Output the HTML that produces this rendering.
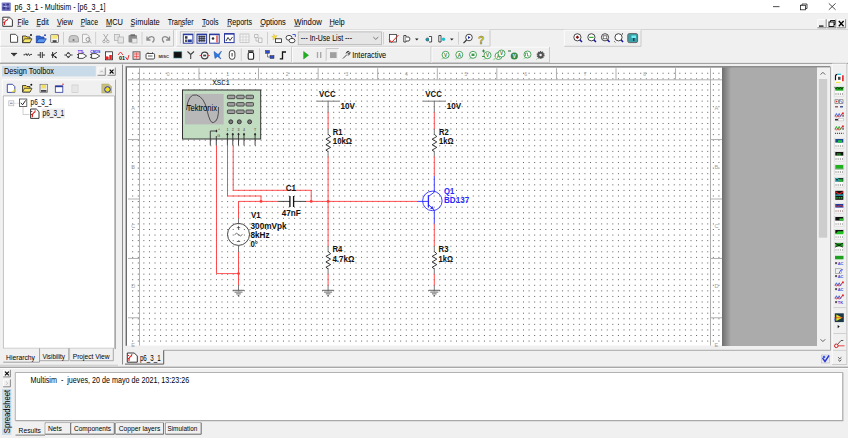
<!DOCTYPE html><html><head><meta charset="utf-8"><style>html,body{margin:0;padding:0;background:#f0f0f0;width:848px;height:438px;overflow:hidden}svg{display:block}text{font-family:"Liberation Sans",sans-serif}</style></head><body>
<svg width="848" height="438" viewBox="0 0 848 438">
<defs>
<linearGradient id="shadow" x1="0" x2="1" y1="0" y2="0"><stop offset="0" stop-color="#6e6e6e"/><stop offset="1" stop-color="#ababab"/></linearGradient>
</defs>
<rect x="0" y="0" width="848" height="438" fill="#f0f0f0"/>
<rect x="0" y="0" width="848" height="14" fill="#ffffff"/>
<rect x="0" y="13.6" width="848" height="0.9" fill="#cfcfcf"/>
<rect x="1.7" y="2.4" width="9.1" height="8.6" rx="0.8" fill="#7c7cc4"/><path d="M3 4 h2 v1.5 h-2z M6.5 3.5 h2.5 v2 h-2.5z M2.5 7 h3 v2.5 h-3z M6.5 7.5 h3 v2 h-3z" fill="#3a3a8a"/><path d="M4 6 h3 v1 h-3z" fill="#b0b0e8"/>
<text x="14.6" y="9.8" font-size="8.2" fill="#000" textLength="90.8" lengthAdjust="spacingAndGlyphs">p6_3_1 - Multisim - [p6_3_1]</text>
<rect x="773" y="6.3" width="6.5" height="0.8" fill="#222"/>
<rect x="800.5" y="5.3" width="5" height="4.5" fill="none" stroke="#222" stroke-width="0.8"/><path d="M802 5.3 V4 H807 V8.5 H805.5" fill="none" stroke="#222" stroke-width="0.8"/>
<path d="M828.8 3.4 L835.6 9.8 M835.6 3.4 L828.8 9.8" stroke="#222" stroke-width="0.8"/>
<rect x="0" y="14" width="848" height="15.5" fill="#f0f0f0"/>
<rect x="0" y="29" width="848" height="1" fill="#d4d4d4"/>
<path d="M2.8 17.2 H9.6 L12.4 20 V26.3 H2.8 Z" fill="#fff" stroke="#222" stroke-width="0.9"/><path d="M4.5 25 Q4.3 21 6.2 20.5 Q7.5 20.2 7.8 18.5 M3.2 19.5 H4.5 M3.2 22.5 H4.3" fill="none" stroke="#e02020" stroke-width="1.1"/><path d="M8.5 19 L9.5 18" stroke="#222" stroke-width="0.6"/>
<text x="17.4" y="24.6" font-size="8.2" fill="#000" textLength="11.3" lengthAdjust="spacingAndGlyphs">File</text>
<rect x="17.4" y="25.8" width="3.8" height="0.7" fill="#000"/>
<text x="36.5" y="24.6" font-size="8.2" fill="#000" textLength="12.3" lengthAdjust="spacingAndGlyphs">Edit</text>
<rect x="36.5" y="25.8" width="3.8" height="0.7" fill="#000"/>
<text x="56.9" y="24.6" font-size="8.2" fill="#000" textLength="15.9" lengthAdjust="spacingAndGlyphs">View</text>
<rect x="56.9" y="25.8" width="3.8" height="0.7" fill="#000"/>
<text x="80.7" y="24.6" font-size="8.2" fill="#000" textLength="17.3" lengthAdjust="spacingAndGlyphs">Place</text>
<rect x="80.7" y="25.8" width="3.8" height="0.7" fill="#000"/>
<text x="106" y="24.6" font-size="8.2" fill="#000" textLength="17" lengthAdjust="spacingAndGlyphs">MCU</text>
<rect x="106" y="25.8" width="5.5" height="0.7" fill="#000"/>
<text x="130.6" y="24.6" font-size="8.2" fill="#000" textLength="29.1" lengthAdjust="spacingAndGlyphs">Simulate</text>
<rect x="130.6" y="25.8" width="3.8" height="0.7" fill="#000"/>
<text x="167.8" y="24.6" font-size="8.2" fill="#000" textLength="25.7" lengthAdjust="spacingAndGlyphs">Transfer</text>
<rect x="180.10000000000002" y="25.8" width="3.0" height="0.7" fill="#000"/>
<text x="202" y="24.6" font-size="8.2" fill="#000" textLength="16.5" lengthAdjust="spacingAndGlyphs">Tools</text>
<rect x="202" y="25.8" width="3.8" height="0.7" fill="#000"/>
<text x="227.2" y="24.6" font-size="8.2" fill="#000" textLength="24.8" lengthAdjust="spacingAndGlyphs">Reports</text>
<rect x="227.2" y="25.8" width="3.8" height="0.7" fill="#000"/>
<text x="260.2" y="24.6" font-size="8.2" fill="#000" textLength="25.6" lengthAdjust="spacingAndGlyphs">Options</text>
<rect x="260.2" y="25.8" width="3.8" height="0.7" fill="#000"/>
<text x="294.3" y="24.6" font-size="8.2" fill="#000" textLength="27.5" lengthAdjust="spacingAndGlyphs">Window</text>
<rect x="294.3" y="25.8" width="5.5" height="0.7" fill="#000"/>
<text x="329.4" y="24.6" font-size="8.2" fill="#000" textLength="15.3" lengthAdjust="spacingAndGlyphs">Help</text>
<rect x="329.4" y="25.8" width="3.8" height="0.7" fill="#000"/>
<rect x="817.3" y="19.2" width="9.299999999999955" height="9.0" fill="#f0f0f0"/>
<path d="M817.6999999999999 28.2 V19.599999999999998 H826.5999999999999" fill="none" stroke="#ffffff" stroke-width="0.8"/>
<path d="M817.3 27.8 H826.1999999999999 V19.2" fill="none" stroke="#6e6e6e" stroke-width="0.8"/>
<rect x="827" y="19.2" width="9.299999999999955" height="9.0" fill="#f0f0f0"/>
<path d="M827.4 28.2 V19.599999999999998 H836.3" fill="none" stroke="#ffffff" stroke-width="0.8"/>
<path d="M827 27.8 H835.9 V19.2" fill="none" stroke="#6e6e6e" stroke-width="0.8"/>
<rect x="836.7" y="19.2" width="9.299999999999955" height="9.0" fill="#f0f0f0"/>
<path d="M837.1 28.2 V19.599999999999998 H846.0" fill="none" stroke="#ffffff" stroke-width="0.8"/>
<path d="M836.7 27.8 H845.6 V19.2" fill="none" stroke="#6e6e6e" stroke-width="0.8"/>
<rect x="819" y="25.5" width="4.5" height="1.2" fill="#000"/>
<rect x="829" y="22" width="5" height="4.5" fill="none" stroke="#000" stroke-width="0.9"/><path d="M830.5 22 V20.5 H835 V24.5 H834" fill="none" stroke="#000" stroke-width="0.9"/>
<path d="M838.8 21 L843.6 26.2 M843.6 21 L838.8 26.2" stroke="#000" stroke-width="1.3"/>
<rect x="0" y="62.9" width="848" height="1" fill="#9a9a9a"/>
<rect x="2" y="66" width="93.8" height="10.4" fill="#c9dbe9"/>
<text x="4" y="73.6" font-size="8.2" fill="#000" textLength="50" lengthAdjust="spacingAndGlyphs">Design Toolbox</text>
<rect x="97.5" y="67.5" width="8.200000000000003" height="8.200000000000003" fill="#f0f0f0"/>
<path d="M97.9 75.7 V67.9 H105.7" fill="none" stroke="#ffffff" stroke-width="0.8"/>
<path d="M97.5 75.3 H105.3 V67.5" fill="none" stroke="#6e6e6e" stroke-width="0.8"/>
<path d="M100.3 72.3 L101.6 70.8 L102.9 72.3" fill="none" stroke="#9a9a9a" stroke-width="0.7"/>
<rect x="107.5" y="67.5" width="8.200000000000003" height="8.200000000000003" fill="#f0f0f0"/>
<path d="M107.9 75.7 V67.9 H115.7" fill="none" stroke="#ffffff" stroke-width="0.8"/>
<path d="M107.5 75.3 H115.3 V67.5" fill="none" stroke="#6e6e6e" stroke-width="0.8"/>
<path d="M109.7 69.7 L113.5 73.5 M113.5 69.7 L109.7 73.5" stroke="#000" stroke-width="1.1"/>
<path d="M2.3 348.5 V79.8 H115.3" fill="none" stroke="#ffffff" stroke-width="0.9"/>
<path d="M115.5 79.6 V349" fill="none" stroke="#a0a0a0" stroke-width="0.9"/>
<path d="M7.3 84.3 H12.5 L14.8 86.6 V92.4 H7.3 Z" fill="#fff" stroke="#2a3a9a" stroke-width="0.9"/><path d="M11.5 92.2 L14.6 88.8 V92.2 Z" fill="#f0e030"/>
<path d="M22.5 85.5 H26 L27 86.5 H30 V92 H22.5 Z" fill="#f0d040" stroke="#222" stroke-width="0.8"/><path d="M22.5 92 L24.5 88.3 H32 L30 92 Z" fill="#f8e870" stroke="#222" stroke-width="0.7"/><circle cx="31.3" cy="84.8" r="1" fill="#111"/>
<rect x="40" y="84.3" width="7.5" height="8" fill="#e8e8e8" stroke="#666" stroke-width="0.7"/><rect x="41.5" y="84.8" width="4.5" height="3.6" fill="#f4e060"/><rect x="41" y="90" width="5.5" height="1.8" fill="#444"/>
<rect x="55.3" y="86" width="7.5" height="6.3" fill="#fff" stroke="#2a3a9a" stroke-width="0.8"/><rect x="55.3" y="85.6" width="7.5" height="1.6" fill="#2a3a9a"/><circle cx="63" cy="84.3" r="0.8" fill="#e03030"/>
<rect x="72" y="85" width="6" height="7.5" fill="none" stroke="#c8c8c8" stroke-width="0.7"/><path d="M74 85 V92.5 M76 85 V92.5" stroke="#d0d0d0" stroke-width="0.6"/>
<path d="M101.8 84 H108.5 L111.5 86.5 V93 H101.8 Z" fill="#c8c080" stroke="#a8a060" stroke-width="0.5"/><circle cx="107.5" cy="89.5" r="2.8" fill="#f0e020" stroke="#2030c0" stroke-width="1"/>
<rect x="3.3" y="95.9" width="111.3" height="252.4" fill="#ffffff"/>
<path d="M3.3 348.3 V95.9 H114.6" fill="none" stroke="#a0a0a0" stroke-width="0.7"/><path d="M114.6 96 V348.3 H3.3" fill="none" stroke="#a8a8a8" stroke-width="0.8"/>
<rect x="8.8" y="100.8" width="5" height="5" fill="#f6f6f6" stroke="#b0b0b0" stroke-width="0.6"/><path d="M10 103.3 H12.6" stroke="#4a5a8a" stroke-width="0.7"/>
<path d="M14 103.3 H19" stroke="#b0b0b0" stroke-width="0.6" stroke-dasharray="0.8 0.6"/>
<rect x="19.4" y="99" width="7.4" height="7.4" fill="#fff" stroke="#444" stroke-width="0.8"/><path d="M20.8 102.8 L22.6 104.8 L25.6 100.4" fill="none" stroke="#111" stroke-width="0.9"/>
<text x="30.6" y="104.8" font-size="8.2" fill="#000" textLength="21.4" lengthAdjust="spacingAndGlyphs">p6_3_1</text>
<path d="M23 107 V114.5 H29.5" fill="none" stroke="#b0b0b0" stroke-width="0.6"/>
<rect x="41.5" y="108.5" width="23.5" height="10" fill="#ececec"/>
<path d="M30.6 109 H36.3 L39 111.7 V118.4 H30.6 Z" fill="#fff" stroke="#222" stroke-width="0.9"/><path d="M32.3 117.2 Q32.1 113.5 33.8 112.8 Q35 112.4 35.3 110.3 M31 111.5 H32.3 M31 114.5 H32.1" fill="none" stroke="#e02020" stroke-width="1.1"/>
<text x="42.6" y="116.2" font-size="8.2" fill="#000" textLength="21.6" lengthAdjust="spacingAndGlyphs">p6_3_1</text>
<path d="M3.2 348.6 V362 H39.5 V348.6" fill="#f0f0f0" stroke="none"/>
<path d="M3.2 362.2 H39.5 V348.6" fill="none" stroke="#8a8a8a" stroke-width="0.8"/>
<text x="6" y="359.7" font-size="7.3" fill="#000" textLength="29" lengthAdjust="spacingAndGlyphs">Hierarchy</text>
<path d="M39.8 348.6 V360.7 H68.7 V348.6" fill="#f0f0f0" stroke="#8a8a8a" stroke-width="0.7"/><path d="M40.3 348.6 V360.2" stroke="#fff" stroke-width="0.6"/>
<text x="42.4" y="358.5" font-size="7.3" fill="#000" textLength="22.6" lengthAdjust="spacingAndGlyphs">Visibility</text>
<path d="M70 348.6 V360.7 H113.3 V348.6" fill="#f0f0f0" stroke="#8a8a8a" stroke-width="0.7"/><path d="M70.5 348.6 V360.2" stroke="#fff" stroke-width="0.6"/>
<text x="72.7" y="358.5" font-size="7.3" fill="#000" textLength="36.9" lengthAdjust="spacingAndGlyphs">Project View</text>
<rect x="0" y="364.8" width="118" height="0.7" fill="#b8b8b8"/>
<rect x="122" y="64.5" width="1" height="300" fill="#8c8c8c"/>
<rect x="125.6" y="66.4" width="705" height="284" fill="#f0f0f0"/>
<rect x="127" y="67.5" width="595" height="278" fill="#ffffff"/>
<path d="M132.2 73.25H722M132.2 78.83H722M132.2 84.41H722M132.2 89.99H722M132.2 95.57H722M132.2 101.15H722M132.2 106.73H722M132.2 112.31H722M132.2 117.89H722M132.2 123.47H722M132.2 129.05H722M132.2 134.63H722M132.2 140.21H722M132.2 145.79H722M132.2 151.37H722M132.2 156.95H722M132.2 162.53H722M132.2 168.11H722M132.2 173.69H722M132.2 179.27H722M132.2 184.85H722M132.2 190.43H722M132.2 196.01H722M132.2 201.59H722M132.2 207.17H722M132.2 212.75H722M132.2 218.33H722M132.2 223.91H722M132.2 229.49H722M132.2 235.07H722M132.2 240.65H722M132.2 246.23H722M132.2 251.81H722M132.2 257.39H722M132.2 262.97H722M132.2 268.55H722M132.2 274.13H722M132.2 279.71H722M132.2 285.29H722M132.2 290.87H722M132.2 296.45H722M132.2 302.03H722M132.2 307.61H722M132.2 313.19H722M132.2 318.77H722M132.2 324.35H722M132.2 329.93H722M132.2 335.51H722M132.2 341.09H722" stroke="#5e5e5e" stroke-width="1" stroke-dasharray="1 4.583" fill="none"/>
<rect x="722" y="67.5" width="95" height="278.5" fill="#ababab"/>
<rect x="722" y="67.5" width="9" height="278.5" fill="url(#shadow)"/>
<path d="M126.3 345.8 V66.9 H830" fill="none" stroke="#6a6a6a" stroke-width="1.4"/>
<path d="M163.7 350.3 H830.6 V66.5" fill="none" stroke="#a0a0a0" stroke-width="0.9"/>
<rect x="817" y="67.6" width="13" height="278.4" fill="#f0f0f0"/>
<rect x="818.8" y="79" width="8.4" height="158.7" fill="#cdcdcd"/>
<path d="M820.6 74.6 L822.9 72.3 L825.2 74.6" fill="none" stroke="#505050" stroke-width="0.9"/>
<path d="M820.6 339.3 L822.9 341.6 L825.2 339.3" fill="none" stroke="#505050" stroke-width="0.9"/>
<path d="M125 350.3 V364.1 H163.7 V350.3" fill="#f0f0f0" stroke="none"/>
<path d="M125.3 350.5 V363.6" stroke="#ffffff" stroke-width="0.7"/>
<path d="M125 364.1 H163.7 V350.3" fill="none" stroke="#4a4a4a" stroke-width="0.9"/>
<path d="M127.3 353 H134.3 L137.3 356 V362.2 H127.3 Z" fill="#fff" stroke="#222" stroke-width="0.9"/><path d="M129 361 Q128.8 357.3 130.5 356.6 Q131.7 356.2 132 354.2 M127.7 355.5 H129 M127.7 358.5 H128.8" fill="none" stroke="#e02020" stroke-width="1.1"/>
<text x="139.9" y="361.3" font-size="8.2" fill="#000" textLength="20.8" lengthAdjust="spacingAndGlyphs">p6_3_1</text>
<rect x="821.5" y="355" width="8" height="8" fill="#e8e8f0" stroke="#b0b0c0" stroke-width="0.5"/><path d="M822.5 358 L825 361.5 L829 355.5" fill="none" stroke="#2a3ad0" stroke-width="1.4"/><circle cx="824" cy="357" r="1.3" fill="#3a5af0"/>
<rect x="0" y="366.6" width="848" height="1.4" fill="#a8a8a8"/>
<rect x="0" y="368" width="848" height="0.8" fill="#ffffff"/>
<rect x="15.3" y="372.5" width="827.5" height="48.5" fill="#ffffff"/>
<path d="M15.3 420.6 V372.5 H842.8" fill="none" stroke="#a0a0a0" stroke-width="0.8"/>
<path d="M15.3 420.6 H842.8 V372.5" fill="none" stroke="#a8a8a8" stroke-width="1.2"/>
<text x="30.6" y="382.6" font-size="8.2" fill="#000" textLength="158.7" lengthAdjust="spacingAndGlyphs" style="white-space:pre">Multisim  -  jueves, 20 de mayo de 2021, 13:23:26</text>
<rect x="2" y="389" width="9.3" height="46" fill="#c9dbe9"/>
<text transform="translate(10.2 433.2) rotate(-90)" font-size="8.2" fill="#000" textLength="43.4" lengthAdjust="spacingAndGlyphs">Spreadsheet</text>
<rect x="3.1" y="369.8" width="7.700000000000001" height="7.5" fill="#f0f0f0"/>
<path d="M3.5 377.3 V370.2 H10.8" fill="none" stroke="#ffffff" stroke-width="0.8"/>
<path d="M3.1 376.90000000000003 H10.4 V369.8" fill="none" stroke="#6e6e6e" stroke-width="0.8"/>
<path d="M5 371.7 L8.9 375.4 M8.9 371.7 L5 375.4" stroke="#000" stroke-width="1.1"/>
<rect x="3.1" y="379.4" width="7.700000000000001" height="7.800000000000011" fill="#f0f0f0"/>
<path d="M3.5 387.2 V379.79999999999995 H10.8" fill="none" stroke="#ffffff" stroke-width="0.8"/>
<path d="M3.1 386.8 H10.4 V379.4" fill="none" stroke="#6e6e6e" stroke-width="0.8"/>
<path d="M6.2 381.8 L7.8 383.3 L6.2 384.8" fill="none" stroke="#b0b0b0" stroke-width="0.7"/>
<path d="M15.5 422 V435.1 H45" fill="#f0f0f0" stroke="none"/>
<path d="M15.5 435.1 H45" stroke="#707070" stroke-width="0.9"/>
<text x="18.6" y="432.6" font-size="7.6" fill="#000" textLength="22.3" lengthAdjust="spacingAndGlyphs">Results</text>
<path d="M45.1 434.2 V422.8 H70.6" fill="none" stroke="#8a8a8a" stroke-width="0.8"/>
<path d="M46.0 433.8 V423.7 H70.1" fill="none" stroke="#ffffff" stroke-width="0.7"/>
<path d="M45.1 434.2 H70.6 V422.8" fill="none" stroke="#5a5a5a" stroke-width="0.9"/>
<text x="48" y="431.4" font-size="7.6" fill="#000" textLength="13.8" lengthAdjust="spacingAndGlyphs">Nets</text>
<path d="M71 434.2 V422.8 H114.3" fill="none" stroke="#8a8a8a" stroke-width="0.8"/>
<path d="M71.9 433.8 V423.7 H113.8" fill="none" stroke="#ffffff" stroke-width="0.7"/>
<path d="M71 434.2 H114.3 V422.8" fill="none" stroke="#5a5a5a" stroke-width="0.9"/>
<text x="74" y="431.4" font-size="7.6" fill="#000" textLength="37" lengthAdjust="spacingAndGlyphs">Components</text>
<path d="M115.6 434.2 V422.8 H163.6" fill="none" stroke="#8a8a8a" stroke-width="0.8"/>
<path d="M116.5 433.8 V423.7 H163.1" fill="none" stroke="#ffffff" stroke-width="0.7"/>
<path d="M115.6 434.2 H163.6 V422.8" fill="none" stroke="#5a5a5a" stroke-width="0.9"/>
<text x="118.8" y="431.4" font-size="7.6" fill="#000" textLength="41.5" lengthAdjust="spacingAndGlyphs">Copper layers</text>
<path d="M165.5 434.2 V422.8 H201.2" fill="none" stroke="#8a8a8a" stroke-width="0.8"/>
<path d="M166.4 433.8 V423.7 H200.7" fill="none" stroke="#ffffff" stroke-width="0.7"/>
<path d="M165.5 434.2 H201.2 V422.8" fill="none" stroke="#5a5a5a" stroke-width="0.9"/>
<text x="167.4" y="431.4" font-size="7.6" fill="#000" textLength="29.9" lengthAdjust="spacingAndGlyphs">Simulation</text>
<path d="M832.2 364.5 V64 H847" fill="none" stroke="#ffffff" stroke-width="0.8"/>
<path d="M832 364.5 H846.8 V64" fill="none" stroke="#c0c0c0" stroke-width="0.8"/>
<rect x="834.8" y="74.3" width="9" height="8.5" rx="2" fill="#fff"/><path d="M835.5 80.3 V76.3 Q835.5 74.3 837.5 74.3" fill="none" stroke="#111" stroke-width="1.2"/><path d="M837.5 74.3 H841.0" stroke="#30c8e0" stroke-width="1.4"/><path d="M842.9 75.3 V81.3" stroke="#e02020" stroke-width="1.6"/><path d="M836.0 82.3 H840.5" stroke="#f0e020" stroke-width="1"/><rect x="838.0" y="76.8" width="2.5" height="3" fill="#444"/>
<rect x="834.7" y="86.5" width="9.2" height="9.6" fill="#fafafa" stroke="#d0d0d0" stroke-width="0.5"/>
<rect x="835.3" y="87.0" width="8" height="3.6" fill="#18a018"/>
<path d="M834.5 87.0 l1.5 2 l1.5 -2 l1.5 2 l1.5 -2 l1.5 2 l1.5 -2" fill="none" stroke="#111" stroke-width="0.6"/>
<path d="M835.5 94.0 H843.0" stroke="#555" stroke-width="1.1" stroke-dasharray="1 1.2"/>
<rect x="835.0" y="99.8" width="3.5" height="3.5" fill="#fff" stroke="#555" stroke-width="0.6"/><rect x="835.8" y="100.7" width="1.6" height="1.6" fill="#e03030"/><rect x="839.5" y="99.8" width="3.5" height="3.5" fill="#fff" stroke="#555" stroke-width="0.6"/><path d="M840.0 100.3 L842.5 103.0" stroke="#3050e0" stroke-width="0.8"/><path d="M835.0 106.8 H838.0" stroke="#804040" stroke-width="1.2"/><path d="M840.0 106.8 H843.0" stroke="#203080" stroke-width="1.2"/>
<path d="M835.0 116.5 l1.4 -3 l1.4 3 l1.4 -3 l1.4 3 l1.4 -3" fill="none" stroke="#3a5ae0" stroke-width="0.9"/><path d="M835.0 115.3 l1.4 2 l1.4 -2 l1.4 2 l1.4 -2" fill="none" stroke="#e03030" stroke-width="0.7"/><rect x="842.0" y="112.5" width="1.8" height="1.8" fill="#e02020"/><rect x="842.3" y="114.8" width="1.5" height="2" fill="#666"/>
<rect x="834.5" y="117.3" width="3" height="1.6" fill="#333" transform="translate(0.5 1.6)"/><rect x="834.5" y="117.3" width="5" height="2.4" fill="#fff" stroke="#999" stroke-width="0.4" transform="translate(4 1.2)"/>
<path d="M835.0 129.5 l1.4 -3 l1.4 3 l1.4 -3 l1.4 3 l1.4 -3" fill="none" stroke="#20a020" stroke-width="0.9"/><path d="M835.0 128.3 l1.4 2 l1.4 -2 l1.4 2 l1.4 -2" fill="none" stroke="#e03030" stroke-width="0.7"/><rect x="842.0" y="125.50000000000001" width="1.8" height="1.8" fill="#e02020"/><rect x="842.3" y="127.80000000000001" width="1.5" height="2" fill="#666"/>
<path d="M834.5 130.3 h8.5" transform="translate(0.5 3)" stroke="#554" stroke-width="1.2" stroke-dasharray="1.1 0.9"/>
<rect x="834.7" y="138.5" width="9.2" height="9.6" fill="#fafafa" stroke="#d0d0d0" stroke-width="0.5"/>
<rect x="835.3" y="139.0" width="8" height="3.6" fill="#1a4a8a"/>
<rect x="834.5" y="139.0" width="4" height="2.5" fill="#20c040" transform="translate(3.5 1.2)"/>
<path d="M835.5 146.0 H843.0" stroke="#665" stroke-width="1.1" stroke-dasharray="1 1.2"/>
<rect x="834.7" y="151.5" width="9.2" height="9.6" fill="#fafafa" stroke="#d0d0d0" stroke-width="0.5"/>
<rect x="835.3" y="152.0" width="8" height="3.6" fill="#111"/>
<text x="834.5" y="152.0" font-size="3.6" fill="#30e030" transform="translate(2.2 3.8)">88</text>
<path d="M835.5 159.0 H843.0" stroke="#555" stroke-width="1.1" stroke-dasharray="1 1.2"/>
<rect x="834.7" y="164.5" width="9.2" height="9.6" fill="#fafafa" stroke="#d0d0d0" stroke-width="0.5"/>
<rect x="835.3" y="165.0" width="8" height="3.6" fill="#20b020"/>
<path d="M834.5 165.0 h8.5" transform="translate(0.5 4)" stroke="#116611" stroke-width="0.6"/>
<path d="M835.5 172.0 H843.0" stroke="#555" stroke-width="1.1" stroke-dasharray="1 1.2"/>
<rect x="834.7" y="177.5" width="9.2" height="9.6" fill="#fafafa" stroke="#d0d0d0" stroke-width="0.5"/>
<rect x="835.3" y="178.0" width="8" height="3.6" fill="#1a3a3a"/>
<circle cx="834.5" cy="178.0" r="1.5" fill="none" stroke="#30d0e0" stroke-width="0.8" transform="translate(2.5 1.8)"/><rect x="834.5" y="178.0" width="3.5" height="2.5" fill="#20c020" transform="translate(4.5 1.3)"/>
<path d="M835.5 185.0 H843.0" stroke="#555" stroke-width="1.1" stroke-dasharray="1 1.2"/>
<rect x="835.3" y="190.8" width="8" height="9" fill="#111"/><path d="M835.5 191.8 L839.2 194.3 L843.1 191.8" fill="none" stroke="#e02020" stroke-width="1.2"/><rect x="835.3" y="194.5" width="8" height="1.2" fill="#30c0e0"/><path d="M835.5 197.8 H843.1" stroke="#20e020" stroke-width="1.3" stroke-dasharray="1.2 0.6"/>
<rect x="834.7" y="203.5" width="9.2" height="9.6" fill="#fafafa" stroke="#d0d0d0" stroke-width="0.5"/>
<rect x="835.3" y="204.0" width="8" height="3.6" fill="#2040a0"/>
<path d="M834.5 204.0 q2 3 4 1 q2 -2 4 1" transform="translate(0.8 1)" fill="none" stroke="#e03030" stroke-width="0.9"/>
<path d="M835.5 211.0 H843.0" stroke="#744" stroke-width="1.1" stroke-dasharray="1 1.2"/>
<rect x="834.7" y="216.5" width="9.2" height="9.6" fill="#fafafa" stroke="#d0d0d0" stroke-width="0.5"/>
<rect x="835.3" y="217.0" width="8" height="3.6" fill="#111"/>
<rect x="834.5" y="217.0" width="4" height="2" fill="#30d030" transform="translate(5 1.5)"/>
<path d="M835.5 224.0 H843.0" stroke="#777" stroke-width="1.1" stroke-dasharray="1 1.2"/>
<rect x="834.7" y="229.5" width="9.2" height="9.6" fill="#fafafa" stroke="#d0d0d0" stroke-width="0.5"/>
<rect x="835.3" y="230.0" width="8" height="3.6" fill="#111"/>
<path d="M834.5 230.0 l3 -3 l5 0 l0 3 z" transform="translate(0.5 4.3)" fill="#20c020"/>
<path d="M835.5 237.0 H843.0" stroke="#777" stroke-width="1.1" stroke-dasharray="1 1.2"/>
<rect x="834.7" y="242.5" width="9.2" height="9.6" fill="#fafafa" stroke="#d0d0d0" stroke-width="0.5"/>
<rect x="835.3" y="243.0" width="8" height="3.6" fill="#20a020"/>
<path d="M834.5 243.0 l8 4 M834.5 243.0 m0 4 l8 -4" transform="translate(0.5 0.2)" stroke="#111" stroke-width="0.8"/>
<path d="M835.5 250.0 H843.0" stroke="#777" stroke-width="1.1" stroke-dasharray="1 1.2"/>
<rect x="834.5" y="260.3" width="8.5" height="3.5" transform="translate(0.5 -4.5)" fill="#20a020"/>
<text x="837.7" y="264.6" font-size="4" font-weight="bold" fill="#3a4ae0">AC</text><rect x="835.1" y="262.1" width="2" height="2" fill="#555"/>
<path d="M834.5 273.3 l2 -3.5 h2" transform="translate(4.5 0)" fill="none" stroke="#3a4ae0" stroke-width="0.9"/><rect x="834.5" y="273.3" width="6" height="4.5" transform="translate(1 -4.5)" fill="none" stroke="#777" stroke-width="0.5"/>
<text x="837.7" y="277.6" font-size="4" font-weight="bold" fill="#3a4ae0">AC</text><rect x="835.1" y="275.1" width="2" height="2" fill="#555"/>
<path d="M834.5 286.3 l1.4 -3 l1.4 3 l1.4 -3 l1.4 3 l1.4 -3" transform="translate(0.5 -0.5)" fill="none" stroke="#3a5ae0" stroke-width="0.9"/><path d="M834.5 286.3 l1.4 2 l1.4 -2 l1.4 2 l1.4 -2" transform="translate(0.5 -2)" fill="none" stroke="#e03030" stroke-width="0.7"/><rect x="834.5" y="286.3" width="1.8" height="1.8" transform="translate(7.5 -4.8)" fill="#e02020"/>
<text x="837.7" y="290.6" font-size="4" font-weight="bold" fill="#3a4ae0">AC</text><rect x="835.1" y="288.1" width="2" height="2" fill="#555"/>
<path d="M834.5 299.3 l1.4 -3 l1.4 3 l1.4 -3 l1.4 3 l1.4 -3" transform="translate(0.5 -0.5)" fill="none" stroke="#3a5ae0" stroke-width="0.9"/><path d="M834.5 299.3 l1.4 2 l1.4 -2 l1.4 2 l1.4 -2" transform="translate(0.5 -2)" fill="none" stroke="#e03030" stroke-width="0.7"/><rect x="834.5" y="299.3" width="1.8" height="1.8" transform="translate(7.5 -4.8)" fill="#e02020"/>
<text x="837.7" y="303.6" font-size="4" font-weight="bold" fill="#3a4ae0">TK</text><rect x="835.1" y="301.1" width="2" height="2" fill="#555"/>
<path d="M833.5 307.6 H846" stroke="#c8c8c8" stroke-width="0.8"/>
<rect x="834.8" y="313.3" width="9" height="8.8" fill="#1a3a4a"/><path d="M836.3 314.5 L842.3 317.7 L836.3 320.9 Z" fill="#f0e020"/><path d="M834.5 317.7 H844.0" stroke="#e02020" stroke-width="0.6"/><rect x="834.5" y="318.5" width="1.5" height="2" fill="#3050e0"/>
<path d="M837.7 325 L839.7 326.6 L837.7 328.2 Z" fill="#111"/>
<path d="M833.5 333.5 H846" stroke="#c8c8c8" stroke-width="0.8"/>
<circle cx="836.3" cy="345.8" r="1.8" fill="none" stroke="#d02020" stroke-width="1"/><path d="M837.5 344.5 L841.0 340.5 H843.3" fill="none" stroke="#333" stroke-width="0.8"/><path d="M838.0 345.8 H844.5" stroke="#e02020" stroke-width="0.8"/>
<path d="M833 350.4 H846.5" stroke="#c8c8c8" stroke-width="0.8"/>
<path d="M838.2 357.3 L839.8 358.8 L841.4 357.3 M838.2 359.8 L839.8 361.3 L841.4 359.8" fill="none" stroke="#222" stroke-width="0.8"/>
<path d="M0.5 46.3 V30.2 H173.5" fill="none" stroke="#ffffff" stroke-width="0.8"/>
<path d="M0.5 46.3 H173.5 V30.2" fill="none" stroke="#c4c4c4" stroke-width="0.9"/>
<path d="M176.5 46.3 V30.2 H490" fill="none" stroke="#ffffff" stroke-width="0.8"/>
<path d="M176.5 46.3 H490 V30.2" fill="none" stroke="#c4c4c4" stroke-width="0.9"/>
<path d="M564.3 46.3 V30.2 H641" fill="none" stroke="#ffffff" stroke-width="0.8"/>
<path d="M564.3 46.3 H641 V30.2" fill="none" stroke="#c4c4c4" stroke-width="0.9"/>
<path d="M0.5 62.6 V47.2 H291.7" fill="none" stroke="#ffffff" stroke-width="0.8"/>
<path d="M0.5 62.6 H291.7 V47.2" fill="none" stroke="#c4c4c4" stroke-width="0.9"/>
<path d="M292.5 62.6 V47.2 H431" fill="none" stroke="#ffffff" stroke-width="0.8"/>
<path d="M292.5 62.6 H431 V47.2" fill="none" stroke="#c4c4c4" stroke-width="0.9"/>
<path d="M432 62.6 V47.2 H549.5" fill="none" stroke="#ffffff" stroke-width="0.8"/>
<path d="M432 62.6 H549.5 V47.2" fill="none" stroke="#c4c4c4" stroke-width="0.9"/>
<rect x="63.1" y="32" width="0.8" height="12.5" fill="#c8c8c8"/>
<rect x="95.3" y="32" width="0.8" height="12.5" fill="#c8c8c8"/>
<rect x="141.6" y="32" width="0.8" height="12.5" fill="#c8c8c8"/>
<rect x="267.1" y="32" width="0.8" height="12.5" fill="#c8c8c8"/>
<rect x="383.1" y="32" width="0.8" height="12.5" fill="#c8c8c8"/>
<rect x="458.1" y="32" width="0.8" height="12.5" fill="#c8c8c8"/>
<rect x="240.79999999999998" y="48.5" width="0.8" height="12.5" fill="#c8c8c8"/>
<rect x="259.20000000000005" y="48.5" width="0.8" height="12.5" fill="#c8c8c8"/>
<path d="M10.5 34.3 H15.5 L17.6 36.4 V42.3 H10.5 Z" fill="#fff" stroke="#3a3a3a" stroke-width="0.9"/>
<path d="M22.5 36 H26 L27 37 H30 V42.6 H22.5 Z" fill="#f0d040" stroke="#222" stroke-width="0.8"/><path d="M22.5 42.6 L24.5 38.8 H32 L30 42.6 Z" fill="#f8e870" stroke="#222" stroke-width="0.7"/><circle cx="31" cy="35" r="1" fill="#111"/>
<path d="M36.3 36 H40 L41 37 H44 V42.6 H36.3 Z" fill="#2e6ad8" stroke="#1a3a9a" stroke-width="0.7"/><path d="M36.3 42.6 L38.5 38.8 H46.3 L44 42.6 Z" fill="#5a9af0" stroke="#1a3a9a" stroke-width="0.7"/><circle cx="45" cy="35.2" r="0.9" fill="#1a3aa0"/>
<rect x="50.7" y="34.6" width="7.8" height="7.9" rx="0.6" fill="#f2f2f2" stroke="#6a6a6a" stroke-width="0.8"/><rect x="52.2" y="35" width="4.8" height="3.8" fill="#f6e878"/><rect x="52.6" y="40.2" width="4" height="2" fill="#444"/><rect x="57.6" y="34.8" width="0.8" height="1.5" fill="#c04040"/>
<path d="M69 39 Q69 35.5 72 35.5 H75 Q78.5 35.5 78.5 39 V42 H69 Z" fill="#c8c8c8" stroke="#9a9a9a" stroke-width="0.8"/><circle cx="73.5" cy="40" r="1" fill="#777"/>
<path d="M82.5 34.3 H87 L89 36.3 V42.6 H82.5 Z" fill="#f6f6f6" stroke="#9a9a9a" stroke-width="0.7"/><circle cx="88" cy="39.5" r="2" fill="none" stroke="#8a8a8a" stroke-width="0.8"/><path d="M89.4 41 L91.5 43" stroke="#8a8a8a" stroke-width="0.9"/>
<path d="M103.5 34 L108 41 M108 34 L103.5 41" stroke="#9a9a9a" stroke-width="0.8"/><circle cx="104" cy="41.5" r="1.3" fill="none" stroke="#9a9a9a" stroke-width="0.7"/><circle cx="107.8" cy="41.5" r="1.3" fill="none" stroke="#9a9a9a" stroke-width="0.7"/>
<rect x="114.5" y="34.5" width="5" height="6" fill="#e6e6e6" stroke="#aaa" stroke-width="0.7"/><rect x="118" y="37" width="5.5" height="6" fill="#e6e6e6" stroke="#aaa" stroke-width="0.7"/>
<rect x="128.5" y="35" width="8.5" height="7.6" fill="#8c8c8c" rx="1"/><rect x="130.5" y="34.3" width="4.5" height="1.8" fill="#6a6a6a"/><rect x="132" y="38.5" width="5" height="4.5" fill="#e8e8e8" stroke="#999" stroke-width="0.5"/>
<path d="M147 36.5 V40 H150.5 M147.3 39.7 Q150 35.5 153 37 Q155.5 39 152.5 42.5" fill="none" stroke="#8a8a8a" stroke-width="1.3"/>
<path d="M169.5 36.5 V40 H166 M169.2 39.7 Q166.5 35.5 163.5 37 Q161 39 164 42.5" fill="none" stroke="#8a8a8a" stroke-width="1.3"/>
<path d="M180.4 43.6 V31.7 H193.6" fill="none" stroke="#c0c0c0" stroke-width="0.8"/><path d="M194.4 43.6 V31.7 H208" fill="none" stroke="#c0c0c0" stroke-width="0.8"/>
<rect x="183.3" y="34.2" width="9.6" height="9" fill="#ffffff" stroke="#2a3aa0" stroke-width="1"/><rect x="183.3" y="33.900000000000006" width="9.6" height="1.3" fill="#2a3aa0"/>
<rect x="185" y="36.2" width="2.5" height="2.5" fill="#334"/><rect x="188" y="39.5" width="3.8" height="2.6" fill="#223a9a"/><rect x="185" y="39.5" width="2.5" height="2.5" fill="#555"/>
<rect x="197" y="34.2" width="9.6" height="9" fill="#ffffff" stroke="#2a3aa0" stroke-width="1"/><rect x="197" y="33.900000000000006" width="9.6" height="1.3" fill="#2a3aa0"/>
<rect x="198.2" y="35.5" width="7.2" height="6.5" fill="#9aa0c0"/>
<rect x="198.5" y="36.0" width="6.8" height="0.8" fill="#333"/>
<rect x="198.5" y="38.1" width="6.8" height="0.8" fill="#333"/>
<rect x="198.5" y="40.2" width="6.8" height="0.8" fill="#333"/>
<rect x="199.3" y="35.7" width="0.7" height="6.2" fill="#333"/>
<rect x="201.5" y="35.7" width="0.7" height="6.2" fill="#333"/>
<rect x="203.70000000000002" y="35.7" width="0.7" height="6.2" fill="#333"/>
<rect x="209.6" y="34.2" width="9.6" height="9" fill="#ffffff" stroke="#2a3aa0" stroke-width="1"/><rect x="209.6" y="33.900000000000006" width="9.6" height="1.3" fill="#2a3aa0"/>
<circle cx="213" cy="38.5" r="1.3" fill="#333"/><rect x="216.3" y="35.5" width="1.4" height="7" fill="#e04040"/>
<rect x="224.5" y="33.6" width="9.6" height="9" fill="#ffffff" stroke="#2a3aa0" stroke-width="1"/><rect x="224.5" y="33.300000000000004" width="9.6" height="1.3" fill="#2a3aa0"/>
<path d="M226 41 L228 37.5 L230 40.5 L232.5 37" fill="none" stroke="#222" stroke-width="0.9"/>
<rect x="240" y="34" width="9" height="8.6" fill="#f6f6f6" stroke="#b8b8b8" stroke-width="0.7"/><path d="M243 34 V42.6 M246 34 V42.6 M240 37 H249 M240 40 H249" stroke="#c8c8c8" stroke-width="0.6"/>
<path d="M254.5 34.5 H258 V37.5 H254.5 Z M258.5 38 H262 V42.5 H258.5 Z M256 37.5 V41 H258.5" fill="#f4f4f4" stroke="#aaa" stroke-width="0.7"/>
<path d="M273.5 33.8 L275 36 L277.3 35.5 L275.8 37.3 L277 39.5 L274.8 38.6 L273 40 L273.3 37.6 L271.6 36.5 L273.9 36.2 Z" fill="#f4e030" stroke="#c8a020" stroke-width="0.3"/><rect x="275.5" y="38.8" width="6" height="3.6" fill="#fff" stroke="#222" stroke-width="0.8"/>
<ellipse cx="289" cy="37.8" rx="3" ry="2.4" fill="#fff" stroke="#222" stroke-width="0.8"/><ellipse cx="292" cy="40.6" rx="3" ry="2.2" fill="#fff" stroke="#222" stroke-width="0.8"/><path d="M292.5 34.5 L295.3 34.5 L295.3 37" fill="none" stroke="#2a4ad0" stroke-width="0.9"/>
<rect x="298.2" y="31.9" width="83.2" height="12.8" fill="#e6e6e6" stroke="#adadad" stroke-width="0.7"/>
<text x="300.75" y="41" font-size="8.2" fill="#000" textLength="51.25" lengthAdjust="spacingAndGlyphs">--- In-Use List ---</text>
<path d="M373.3 37 L375.8 39.4 L378.3 37" fill="none" stroke="#444" stroke-width="0.7"/>
<rect x="389.5" y="34.5" width="7" height="7.5" fill="#fff" stroke="#333" stroke-width="0.8"/><path d="M389 39 L391.5 42.5 L398.5 35" fill="none" stroke="#e02020" stroke-width="1"/>
<path d="M403.8 35.5 H406 V42 H403.8 Z" fill="#fff" stroke="#222" stroke-width="0.8"/><path d="M406 37 H409 Q411 39 409 41 H406" fill="#fff" stroke="#222" stroke-width="0.8"/><path d="M415 38.5 H418.6 L416.8 40.6 Z" fill="#222"/>
<circle cx="427.5" cy="39.5" r="1.6" fill="#1aa0b0" stroke="#134" stroke-width="0.5"/><path d="M429 36.5 H431.6 V42 H429" fill="#fff" stroke="#222" stroke-width="0.8"/>
<path d="M438.8 35.5 H441 V42 H438.8 Z" fill="#fff" stroke="#222" stroke-width="0.8"/><circle cx="443.5" cy="39.3" r="1.7" fill="#1ac0d0"/><path d="M450 38.5 H453.6 L451.8 40.6 Z" fill="#222"/>
<circle cx="469" cy="37.5" r="3.3" fill="#fff" stroke="#333" stroke-width="0.9"/><path d="M468 36 L470.5 37.5 L468 39 Z" fill="#1a2aa0"/><path d="M466.6 40 L463.5 43.2" stroke="#333" stroke-width="1.2"/>
<text x="478" y="43.5" font-size="10.5" font-weight="bold" fill="#e8d820" stroke="#555" stroke-width="0.35">?</text>
<circle cx="577.4" cy="37.3" r="3.6" fill="#fff" stroke="#333" stroke-width="0.9"/><path d="M579.9 39.9 L582.0 42.0" stroke="#1a1aa0" stroke-width="1.5"/>
<path d="M577.4 35.5 L579.2 37.3 L577.4 39.1 L575.6 37.3 Z" fill="#8a1010"/>
<circle cx="591.4" cy="37.3" r="3.6" fill="#fff" stroke="#333" stroke-width="0.9"/><path d="M593.9 39.9 L596.0 42.0" stroke="#1a1aa0" stroke-width="1.5"/>
<rect x="589.2" y="36.8" width="4.4" height="1.1" fill="#20a020"/>
<circle cx="605" cy="37.3" r="3.6" fill="#fff" stroke="#333" stroke-width="0.9"/><path d="M607.5 39.9 L609.6 42.0" stroke="#1a1aa0" stroke-width="1.5"/>
<rect x="603.2" y="35.8" width="3.6" height="3" fill="none" stroke="#555" stroke-width="0.8"/>
<circle cx="618.5" cy="37.3" r="3.6" fill="#fff" stroke="#333" stroke-width="0.9"/><path d="M621.0 39.9 L623.1 42.0" stroke="#1a1aa0" stroke-width="1.5"/>
<path d="M622 33.5 L623 34.3 M614.5 41.5 L615.3 42.3" stroke="#111" stroke-width="1"/>
<rect x="627.8" y="33.6" width="9.8" height="9" rx="1.5" fill="#3aa0a8" stroke="#666" stroke-width="1"/><rect x="631.5" y="35.5" width="4.5" height="2.5" fill="#70f0f0"/><rect x="633" y="38" width="1.5" height="3" fill="#204060"/>
<path d="M11.2 53.2 H16.9 L14 56.6 Z" fill="#3a3a3a"/><path d="M11 53.4 H17.1" stroke="#222" stroke-width="0.9"/>
<path d="M23.5 54.8 H25 L26 53.6 L27.2 55.6 L28.4 53.6 L29.6 55.6 L30.6 54.4 H32" fill="none" stroke="#333" stroke-width="1"/>
<path d="M37.5 55 H40.3 M42.3 55 H45 M40.3 52 V58 M42.3 52 V58" fill="none" stroke="#333" stroke-width="1"/>
<path d="M52.7 52 V58 M52.7 55 L56.8 52.3 M52.7 55 L56.8 58 M51 55 H52.7" fill="none" stroke="#222" stroke-width="1"/><circle cx="55.6" cy="57.2" r="0.8" fill="#111"/>
<path d="M64.3 55 H66 L68.3 52.3 L70.6 55 L68.3 57.8 L66 55 M70.6 55 H72.6 M67 53.2 H69.6 M67 56.8 H69.6" fill="none" stroke="#333" stroke-width="0.9"/>
<text x="77.8" y="53.2" font-size="3.4" font-weight="bold" fill="#2020f0" textLength="6.3" lengthAdjust="spacingAndGlyphs">TTL</text><path d="M78.5 53.6 H83 L86.6 56 L83 58.4 H78.5 Z M77 54.6 H78.5 M77 57.4 H78.5" fill="#fff" stroke="#222" stroke-width="0.8"/>
<text x="90.2" y="53.2" font-size="3.4" font-weight="bold" fill="#2020f0" textLength="10.2" lengthAdjust="spacingAndGlyphs">CMOS</text><path d="M91.6 53.6 H96 L99.8 56 L96 58.4 H91.6 Z M90 54.6 H91.6 M90 57.4 H91.6" fill="#fff" stroke="#222" stroke-width="0.8"/>
<rect x="105.5" y="51.8" width="7" height="8" fill="#fff" stroke="#222" stroke-width="0.8"/><circle cx="107" cy="58" r="1.8" fill="#f02020"/><rect x="109.3" y="55" width="2.5" height="4.5" fill="#e02020"/>
<path d="M118 55 L120.5 52 L123 55" fill="none" stroke="#f02020" stroke-width="0.9"/><text x="119" y="60" font-size="5.5" font-weight="bold" fill="#111">01</text><path d="M125.5 57 L127.5 60 L129 55" fill="none" stroke="#e02020" stroke-width="0.9"/>
<rect x="133" y="51.8" width="7" height="7.5" fill="#f4c8c8" stroke="#555" stroke-width="0.9"/><path d="M134 54 H139 M134 56.5 H139 M136.5 52.5 V58.5" stroke="#e04040" stroke-width="0.6"/>
<rect x="146" y="53.5" width="8.6" height="5.5" rx="1.2" fill="#fff" stroke="#333" stroke-width="0.9"/><path d="M148 53.5 V52.3 M152.5 53.5 V52.3 M148 56 H152.5" stroke="#333" stroke-width="0.8"/>
<text x="158.6" y="58.3" font-size="4.2" font-weight="bold" fill="#333">MISC</text>
<rect x="173.8" y="51.8" width="8" height="6.2" fill="#111" stroke="#2a8a9a" stroke-width="0.6"/>
<path d="M190.7 59 V54 M190.7 54.5 L187.5 51.5 M190.7 54.5 L194 51.5" fill="none" stroke="#444" stroke-width="1.1"/>
<circle cx="204.7" cy="55.5" r="3.3" fill="#fff" stroke="#444" stroke-width="1.2"/><path d="M199.6 55.5 H201.4 M208 55.5 H209.8" stroke="#e04040" stroke-width="0.9"/><rect x="203.2" y="54.6" width="3" height="1.8" fill="#444"/>
<path d="M214 51.5 L218 54.5 L221.5 51 L219 56 L221 59 L217.5 56.5 L215 58.5 Z" fill="#2a7ae0" stroke="#1a4ab0" stroke-width="0.5"/>
<rect x="229.3" y="50.5" width="5.6" height="8.8" rx="2.5" fill="#fff" stroke="#333" stroke-width="0.9"/><rect x="231.5" y="53" width="1.2" height="3.5" fill="#555"/>
<rect x="248" y="50.3" width="5.6" height="1.5" fill="#333"/><rect x="248.2" y="52.5" width="5.4" height="6.8" rx="1.3" fill="#fff" stroke="#222" stroke-width="1.1"/>
<rect x="265.5" y="50.5" width="4" height="2.8" fill="#2a4ad0" stroke="#333" stroke-width="0.5"/><rect x="270" y="55.5" width="4" height="3" fill="#2a4ad0" stroke="#333" stroke-width="0.5"/><path d="M267.5 53.3 V57 H270" fill="none" stroke="#555" stroke-width="0.7"/>
<path d="M279.8 58.8 H282.5 V52 H286" fill="none" stroke="#111" stroke-width="1.3"/>
<path d="M303.6 51.5 L308.6 55.2 L303.6 59 Z" fill="#20b020" stroke="#108010" stroke-width="0.4"/>
<rect x="316.8" y="52" width="1.4" height="6" fill="#a8a8a8"/><rect x="320" y="52" width="1.4" height="6" fill="#a8a8a8"/>
<path d="M326.2 61 V48.5 H339" fill="none" stroke="#c0c0c0" stroke-width="0.8"/><path d="M326.2 61 H339 V48.5" fill="none" stroke="#ffffff" stroke-width="0.8"/><rect x="330" y="52.2" width="6.6" height="5.8" fill="#a0a0a0"/>
<path d="M343 58.5 L347 54.5 M346 53.5 Q346.5 51 349 51.3 L347.5 52.8 L348.5 53.8 L350 52.3 Q350.3 54.8 347.8 55.3" fill="none" stroke="#333" stroke-width="0.9"/>
<text x="352.2" y="58.3" font-size="8.2" fill="#000" textLength="34" lengthAdjust="spacingAndGlyphs">Interactive</text>
<path d="M440.40000000000003 59.8 L443.6 57.0 L445.1 58.3 Z" fill="#a8d8a8"/>
<circle cx="445.6" cy="54.8" r="3.5" fill="#fff" stroke="#3a9a4a" stroke-width="0.9"/>
<text x="445.6" y="56.5" font-size="4.6" text-anchor="middle" font-weight="bold" fill="#2a7a3a">V</text>
<path d="M454.1 59.8 L457.3 57.0 L458.8 58.3 Z" fill="#a8d8a8"/>
<circle cx="459.3" cy="54.8" r="3.5" fill="#fff" stroke="#3a9a4a" stroke-width="0.9"/>
<text x="459.3" y="56.5" font-size="4.6" text-anchor="middle" font-weight="bold" fill="#2a7a3a">A</text>
<path d="M467.8 59.8 L471 57.0 L472.5 58.3 Z" fill="#a8d8a8"/>
<circle cx="473" cy="54.8" r="3.5" fill="#fff" stroke="#3a9a4a" stroke-width="0.9"/>
<rect x="471.5" y="53.6" width="3" height="2.4" fill="#3a9a4a"/>
<path d="M482.3 60.2 L485.5 57.400000000000006 L487.0 58.7 Z" fill="#a8d8a8"/>
<circle cx="487.5" cy="55.2" r="3.5" fill="#fff" stroke="#3a9a4a" stroke-width="0.9"/>
<text x="487.5" y="56.900000000000006" font-size="4.6" text-anchor="middle" font-weight="bold" fill="#2a7a3a">V</text>
<path d="M482 51 H485 M483.5 49.5 V52.5 M482 56.5 H484.5" stroke="#2a8a3a" stroke-width="0.9"/>
<circle cx="498.5" cy="56" r="3.5" fill="#fff" stroke="#3a9a4a" stroke-width="0.9"/>
<text x="498.5" y="57.7" font-size="4.6" text-anchor="middle" font-weight="bold" fill="#2a7a3a">A</text>
<circle cx="501.5" cy="53.5" r="3.5" fill="#fff" stroke="#3a9a4a" stroke-width="0.9"/>
<text x="501.5" y="55.2" font-size="4.6" text-anchor="middle" font-weight="bold" fill="#2a7a3a">V</text>
<path d="M493.5 60 L496 57.5" stroke="#a8d8a8" stroke-width="1.2"/>
<path d="M508 51 H511" stroke="#2a6a3a" stroke-width="1"/><circle cx="514.3" cy="56" r="3.6" fill="#3a8a4a"/><text x="514.3" y="57.8" font-size="4.6" text-anchor="middle" font-weight="bold" fill="#fff">V</text>
<path d="M522.3 59.5 L525.5 56.7 L527.0 58.0 Z" fill="#a8d8a8"/>
<circle cx="527.5" cy="54.5" r="3.5" fill="#fff" stroke="#3a9a4a" stroke-width="0.9"/>
<path d="M525.5 56 V53 H527.5 V56 H529.5" fill="none" stroke="#3a8a4a" stroke-width="0.7"/>
<circle cx="540.6" cy="55" r="3.2" fill="#555" stroke="#555" stroke-width="1.6" stroke-dasharray="1.2 0.8"/><circle cx="540.6" cy="55" r="1.2" fill="#f0f0f0"/><path d="M536 59.8 L538 58" stroke="#a8d8a8" stroke-width="1"/>
<rect x="128" y="79.4" width="594" height="0.9" fill="#a8a8a8"/>
<rect x="139" y="68.2" width="0.9" height="277.3" fill="#a8a8a8"/>
<rect x="710" y="68.2" width="0.9" height="277.3" fill="#a8a8a8"/>
<rect x="198.52500000000003" y="68.2" width="0.9" height="11.5" fill="#a8a8a8"/>
<rect x="258.1" y="68.2" width="0.9" height="11.5" fill="#a8a8a8"/>
<rect x="317.675" y="68.2" width="0.9" height="11.5" fill="#a8a8a8"/>
<rect x="377.25000000000006" y="68.2" width="0.9" height="11.5" fill="#a8a8a8"/>
<rect x="436.825" y="68.2" width="0.9" height="11.5" fill="#a8a8a8"/>
<rect x="496.40000000000003" y="68.2" width="0.9" height="11.5" fill="#a8a8a8"/>
<rect x="555.975" y="68.2" width="0.9" height="11.5" fill="#a8a8a8"/>
<rect x="615.55" y="68.2" width="0.9" height="11.5" fill="#a8a8a8"/>
<rect x="675.125" y="68.2" width="0.9" height="11.5" fill="#a8a8a8"/>
<text x="168.1" y="75.5" font-size="5" fill="#9a9a9a" text-anchor="middle">0</text>
<text x="227.675" y="75.5" font-size="5" fill="#9a9a9a" text-anchor="middle">1</text>
<text x="287.25" y="75.5" font-size="5" fill="#9a9a9a" text-anchor="middle">2</text>
<text x="346.82500000000005" y="75.5" font-size="5" fill="#9a9a9a" text-anchor="middle">3</text>
<text x="406.4" y="75.5" font-size="5" fill="#9a9a9a" text-anchor="middle">4</text>
<text x="465.975" y="75.5" font-size="5" fill="#9a9a9a" text-anchor="middle">5</text>
<text x="525.5500000000001" y="75.5" font-size="5" fill="#9a9a9a" text-anchor="middle">6</text>
<text x="585.125" y="75.5" font-size="5" fill="#9a9a9a" text-anchor="middle">7</text>
<text x="644.7" y="75.5" font-size="5" fill="#9a9a9a" text-anchor="middle">8</text>
<rect x="128" y="139.15" width="11.5" height="0.9" fill="#a8a8a8"/>
<rect x="710.5" y="139.15" width="11.5" height="0.9" fill="#a8a8a8"/>
<rect x="128" y="198.55" width="11.5" height="0.9" fill="#a8a8a8"/>
<rect x="710.5" y="198.55" width="11.5" height="0.9" fill="#a8a8a8"/>
<rect x="128" y="257.95" width="11.5" height="0.9" fill="#a8a8a8"/>
<rect x="710.5" y="257.95" width="11.5" height="0.9" fill="#a8a8a8"/>
<rect x="128" y="317.35" width="11.5" height="0.9" fill="#a8a8a8"/>
<rect x="710.5" y="317.35" width="11.5" height="0.9" fill="#a8a8a8"/>
<text x="133.2" y="109.5" font-size="5.6" fill="#a0a0a0" text-anchor="middle">A</text>
<text x="716.4" y="109.5" font-size="5.6" fill="#a0a0a0" text-anchor="middle">A</text>
<text x="133.2" y="168.9" font-size="5.6" fill="#a0a0a0" text-anchor="middle">B</text>
<text x="716.4" y="168.9" font-size="5.6" fill="#a0a0a0" text-anchor="middle">B</text>
<text x="133.2" y="228.3" font-size="5.6" fill="#a0a0a0" text-anchor="middle">C</text>
<text x="716.4" y="228.3" font-size="5.6" fill="#a0a0a0" text-anchor="middle">C</text>
<text x="133.2" y="287.7" font-size="5.6" fill="#a0a0a0" text-anchor="middle">D</text>
<text x="716.4" y="287.7" font-size="5.6" fill="#a0a0a0" text-anchor="middle">D</text>
<text x="133.2" y="347.1" font-size="5.6" fill="#a0a0a0" text-anchor="middle">E</text>
<text x="716.4" y="347.1" font-size="5.6" fill="#a0a0a0" text-anchor="middle">E</text>
<text x="212.3" y="84.9" font-size="7.6" style="font-family:'Liberation Mono',monospace" fill="#111" textLength="17.7" lengthAdjust="spacingAndGlyphs">XSC1</text>
<rect x="182.5" y="90" width="78.2" height="49" fill="#c2dcc2" stroke="#333" stroke-width="1"/>
<rect x="185" y="93.9" width="38.7" height="30.5" fill="#b8b8b8"/>
<path d="M186.5 110 Q188 93 196.5 95 Q204 97 207 110 Q210 124 213.5 122.5 Q219 121 218.5 107" fill="none" stroke="#222" stroke-width="0.7"/>
<text x="186.7" y="111" font-size="8.4" fill="#000" textLength="30.3" lengthAdjust="spacingAndGlyphs">Tektronix</text>
<rect x="227.4" y="95.2" width="7.5" height="3.5" rx="0.8" fill="#a0a0a0" stroke="#333" stroke-width="0.8"/>
<rect x="236.70000000000002" y="95.2" width="7.5" height="3.5" rx="0.8" fill="#a0a0a0" stroke="#333" stroke-width="0.8"/>
<rect x="246.0" y="95.2" width="7.5" height="3.5" rx="0.8" fill="#a0a0a0" stroke="#333" stroke-width="0.8"/>
<rect x="227.4" y="102.60000000000001" width="7.5" height="3.5" rx="0.8" fill="#a0a0a0" stroke="#333" stroke-width="0.8"/>
<rect x="236.70000000000002" y="102.60000000000001" width="7.5" height="3.5" rx="0.8" fill="#a0a0a0" stroke="#333" stroke-width="0.8"/>
<rect x="246.0" y="102.60000000000001" width="7.5" height="3.5" rx="0.8" fill="#a0a0a0" stroke="#333" stroke-width="0.8"/>
<rect x="227.4" y="110.0" width="7.5" height="3.5" rx="0.8" fill="#a0a0a0" stroke="#333" stroke-width="0.8"/>
<rect x="236.70000000000002" y="110.0" width="7.5" height="3.5" rx="0.8" fill="#a0a0a0" stroke="#333" stroke-width="0.8"/>
<rect x="246.0" y="110.0" width="7.5" height="3.5" rx="0.8" fill="#a0a0a0" stroke="#333" stroke-width="0.8"/>
<circle cx="230.8" cy="121.8" r="2" fill="#7a7a7a" stroke="#222" stroke-width="0.8"/>
<circle cx="239.3" cy="121.8" r="2" fill="#7a7a7a" stroke="#222" stroke-width="0.8"/>
<circle cx="249.6" cy="121.8" r="2" fill="#7a7a7a" stroke="#222" stroke-width="0.8"/>
<text x="227.4" y="130.5" font-size="3.6" fill="#333" text-anchor="middle">1</text>
<path d="M227.4 132.8 L228.6 134.3 L227.4 135.8 L226.20000000000002 134.3 Z" fill="#222"/>
<path d="M227.4 134.3 V145.4" fill="none" stroke="#333" stroke-width="0.9"/>
<text x="232.8" y="130.5" font-size="3.6" fill="#333" text-anchor="middle">2</text>
<path d="M232.8 132.8 L234.0 134.3 L232.8 135.8 L231.60000000000002 134.3 Z" fill="#222"/>
<path d="M232.8 134.3 V145.4" fill="none" stroke="#333" stroke-width="0.9"/>
<text x="238.5" y="130.5" font-size="3.6" fill="#333" text-anchor="middle">3</text>
<path d="M238.5 132.8 L239.7 134.3 L238.5 135.8 L237.3 134.3 Z" fill="#222"/>
<path d="M238.5 134.3 V145.4" fill="none" stroke="#333" stroke-width="0.9"/>
<text x="244" y="130.5" font-size="3.6" fill="#333" text-anchor="middle">4</text>
<path d="M244 132.8 L245.2 134.3 L244 135.8 L242.8 134.3 Z" fill="#222"/>
<path d="M244 134.3 V145.4" fill="none" stroke="#333" stroke-width="0.9"/>
<text x="255.1" y="130.5" font-size="3.6" fill="#333" text-anchor="middle">T</text>
<path d="M255.1 132.8 L256.3 134.3 L255.1 135.8 L253.9 134.3 Z" fill="#222"/>
<path d="M255.1 134.3 V145.4" fill="none" stroke="#333" stroke-width="0.9"/>
<path d="M216.3 129.5 L217.5 131 L216.3 132.5 L215.1 131 Z" fill="#222"/><text x="218" y="130" font-size="3.5" fill="#333">+</text><text x="217.3" y="137" font-size="3.5" fill="#333">G</text>
<path d="M210.3 145.4 V131 H215" fill="none" stroke="#333" stroke-width="0.9"/>
<path d="M216.3 136 V145.4" fill="none" stroke="#333" stroke-width="0.9"/>
<path d="M216.5 145.4 V273.6 H238.5" fill="none" stroke="#ff3c3c" stroke-width="0.9"/>
<path d="M227.5 145.4 V196 H261 V201.4" fill="none" stroke="#ff3c3c" stroke-width="0.9"/>
<path d="M233.2 145.4 V190.3 H311.2 V201.4" fill="none" stroke="#ff3c3c" stroke-width="0.9"/>
<path d="M238.5 218.3 V201.4 H278.2" fill="none" stroke="#ff3c3c" stroke-width="0.9"/>
<path d="M306 201.4 H417.8" fill="none" stroke="#ff3c3c" stroke-width="0.9"/>
<circle cx="261" cy="201.4" r="1.45" fill="#ff3c3c"/>
<circle cx="311.2" cy="201.4" r="1.45" fill="#ff3c3c"/>
<circle cx="328.1" cy="201.4" r="1.45" fill="#ff3c3c"/>
<circle cx="238.5" cy="273.6" r="1.45" fill="#ff3c3c"/>
<path d="M278.2 201.4 H289.9 M293.6 201.4 H306" fill="none" stroke="#333" stroke-width="0.9"/>
<path d="M289.9 196 V207 M293.6 196 V207" fill="none" stroke="#111" stroke-width="1.3"/>
<text x="285.8" y="191" font-size="8.6" font-weight="bold" fill="#111" textLength="10.3" lengthAdjust="spacingAndGlyphs">C1</text>
<text x="281.7" y="216.1" font-size="8.6" font-weight="bold" fill="#111" textLength="18.9" lengthAdjust="spacingAndGlyphs">47nF</text>
<path d="M238.5 218.3 V223.4" fill="none" stroke="#6a6a6a" stroke-width="0.9"/>
<circle cx="238.5" cy="234.4" r="11" fill="none" stroke="#333" stroke-width="0.9"/>
<path d="M236.8 227.6 H240.2 M238.5 225.9 V229.3 M236.8 241.5 H240.2" stroke="#333" stroke-width="0.7"/>
<path d="M234.5 234.8 Q236.5 231.8 238.5 234.6 Q240.5 237.4 242.5 234.4" fill="none" stroke="#333" stroke-width="0.7"/>
<path d="M238.5 245.4 V252" fill="none" stroke="#6a6a6a" stroke-width="0.9"/>
<path d="M238.5 252 V285.2" fill="none" stroke="#ff3c3c" stroke-width="0.9"/>
<path d="M238.5 285.2 V290" fill="none" stroke="#6a6a6a" stroke-width="0.9"/>
<text x="251" y="217.9" font-size="8.6" font-weight="bold" fill="#111" textLength="9.6" lengthAdjust="spacingAndGlyphs">V1</text>
<text x="250.5" y="228.9" font-size="8.6" font-weight="bold" fill="#111" textLength="36.2" lengthAdjust="spacingAndGlyphs">300mVpk</text>
<text x="250.5" y="238.4" font-size="8.6" font-weight="bold" fill="#111" textLength="19.1" lengthAdjust="spacingAndGlyphs">8kHz</text>
<text x="250.5" y="247.2" font-size="8.6" font-weight="bold" fill="#111" textLength="7.5" lengthAdjust="spacingAndGlyphs">0°</text>
<path d="M232.7 290.3 H244.3 M234.5 292.1 H242.5 M236.2 293.90000000000003 H240.8 M237.7 295.5 H239.3" stroke="#505050" stroke-width="0.9"/>
<text x="319.1" y="96.5" font-size="8.6" font-weight="bold" fill="#111" textLength="16.6" lengthAdjust="spacingAndGlyphs">VCC</text>
<text x="340.5" y="108.7" font-size="8.6" font-weight="bold" fill="#111" textLength="14.4" lengthAdjust="spacingAndGlyphs">10V</text>
<path d="M316.6 101.2 H339.3" fill="none" stroke="#888" stroke-width="1.1"/>
<path d="M328.1 101.2 V112.3" fill="none" stroke="#6a6a6a" stroke-width="0.9"/>
<path d="M328.1 112.3 V129" fill="none" stroke="#ff3c3c" stroke-width="0.9"/>
<path d="M328.1 129 V134.2" fill="none" stroke="#6a6a6a" stroke-width="0.9"/>
<path d="M328.10 134.20 L330.60 136.50 L325.90 139.20 L330.60 141.90 L325.90 144.80 L330.60 147.40 L325.90 150.10 L328.10 151.60" fill="none" stroke="#222" stroke-width="0.9"/>
<path d="M328.1 151.6 V156.4" fill="none" stroke="#6a6a6a" stroke-width="0.9"/>
<text x="332.8" y="134.8" font-size="8.6" font-weight="bold" fill="#111" textLength="9.7" lengthAdjust="spacingAndGlyphs">R1</text>
<text x="332.8" y="144.3" font-size="8.6" font-weight="bold" fill="#111" textLength="19.3" lengthAdjust="spacingAndGlyphs">10kΩ</text>
<text x="425.3" y="96.5" font-size="8.6" font-weight="bold" fill="#111" textLength="16.6" lengthAdjust="spacingAndGlyphs">VCC</text>
<text x="446.7" y="108.7" font-size="8.6" font-weight="bold" fill="#111" textLength="14.4" lengthAdjust="spacingAndGlyphs">10V</text>
<path d="M422.8 101.2 H445.5" fill="none" stroke="#888" stroke-width="1.1"/>
<path d="M434.3 101.2 V112.3" fill="none" stroke="#6a6a6a" stroke-width="0.9"/>
<path d="M434.3 112.3 V129" fill="none" stroke="#ff3c3c" stroke-width="0.9"/>
<path d="M434.3 129 V134.2" fill="none" stroke="#6a6a6a" stroke-width="0.9"/>
<path d="M434.30 134.20 L436.80 136.50 L432.10 139.20 L436.80 141.90 L432.10 144.80 L436.80 147.40 L432.10 150.10 L434.30 151.60" fill="none" stroke="#222" stroke-width="0.9"/>
<path d="M434.3 151.6 V156.4" fill="none" stroke="#6a6a6a" stroke-width="0.9"/>
<text x="439.0" y="134.8" font-size="8.6" font-weight="bold" fill="#111" textLength="9.7" lengthAdjust="spacingAndGlyphs">R2</text>
<text x="439.0" y="144.3" font-size="8.6" font-weight="bold" fill="#111" textLength="14.5" lengthAdjust="spacingAndGlyphs">1kΩ</text>
<path d="M328.1 156.4 V246" fill="none" stroke="#ff3c3c" stroke-width="0.9"/>
<path d="M328.1 246 V251.4" fill="none" stroke="#6a6a6a" stroke-width="0.9"/>
<path d="M328.10 251.40 L330.60 253.70 L325.90 256.40 L330.60 259.10 L325.90 262.00 L330.60 264.60 L325.90 267.30 L328.10 268.80" fill="none" stroke="#222" stroke-width="0.9"/>
<path d="M328.1 268.8 V273.9" fill="none" stroke="#6a6a6a" stroke-width="0.9"/>
<path d="M328.1 273.9 V285.6" fill="none" stroke="#ff3c3c" stroke-width="0.9"/>
<path d="M328.1 285.6 V290.3" fill="none" stroke="#6a6a6a" stroke-width="0.9"/>
<text x="332.4" y="251.9" font-size="8.6" font-weight="bold" fill="#111" textLength="9.9" lengthAdjust="spacingAndGlyphs">R4</text>
<text x="332.4" y="261.5" font-size="8.6" font-weight="bold" fill="#111" textLength="22.1" lengthAdjust="spacingAndGlyphs">4.7kΩ</text>
<path d="M322.3 290.3 H333.90000000000003 M324.1 292.1 H332.1 M325.8 293.90000000000003 H330.40000000000003 M327.3 295.5 H328.90000000000003" stroke="#505050" stroke-width="0.9"/>
<path d="M434.3 156.4 V176" fill="none" stroke="#ff3c3c" stroke-width="0.9"/>
<path d="M434.3 176 V192.2" fill="none" stroke="#2a2aff" stroke-width="0.9"/>
<path d="M434.3 210 V223.7" fill="none" stroke="#2a2aff" stroke-width="0.9"/>
<path d="M434.3 223.7 V246" fill="none" stroke="#ff3c3c" stroke-width="0.9"/>
<path d="M434.3 246 V251.4" fill="none" stroke="#6a6a6a" stroke-width="0.9"/>
<path d="M434.30 251.40 L436.80 253.70 L432.10 256.40 L436.80 259.10 L432.10 262.00 L436.80 264.60 L432.10 267.30 L434.30 268.80" fill="none" stroke="#222" stroke-width="0.9"/>
<path d="M434.3 268.8 V273.9" fill="none" stroke="#6a6a6a" stroke-width="0.9"/>
<path d="M434.3 273.9 V285.6" fill="none" stroke="#ff3c3c" stroke-width="0.9"/>
<path d="M434.3 285.6 V290.3" fill="none" stroke="#6a6a6a" stroke-width="0.9"/>
<text x="438.6" y="251.9" font-size="8.6" font-weight="bold" fill="#111" textLength="9.9" lengthAdjust="spacingAndGlyphs">R3</text>
<text x="438.6" y="261.5" font-size="8.6" font-weight="bold" fill="#111" textLength="14.5" lengthAdjust="spacingAndGlyphs">1kΩ</text>
<path d="M428.5 290.3 H440.1 M430.3 292.1 H438.3 M432.0 293.90000000000003 H436.6 M433.5 295.5 H435.1" stroke="#505050" stroke-width="0.9"/>
<circle cx="432.35" cy="200.9" r="9.75" fill="none" stroke="#2a2aff" stroke-width="0.9"/>
<path d="M417.8 201.4 H428.4" fill="none" stroke="#2a2aff" stroke-width="0.9"/>
<path d="M428.4 195.2 V207.2" fill="none" stroke="#2a2aff" stroke-width="1.3"/>
<path d="M428.4 196.5 L434.3 192.2" fill="none" stroke="#2a2aff" stroke-width="0.9"/>
<path d="M428.4 204.5 L434.3 210" fill="none" stroke="#2a2aff" stroke-width="0.9"/>
<path d="M433.6 209.4 L430 208.4 L432.3 205.9 Z" fill="#2a2aff"/>
<text x="444" y="193.5" font-size="8.6" font-weight="bold" fill="#2a2aff" textLength="10.2" lengthAdjust="spacingAndGlyphs">Q1</text>
<text x="444" y="203.1" font-size="8.6" font-weight="bold" fill="#2a2aff" textLength="25.2" lengthAdjust="spacingAndGlyphs">BD137</text>
</svg></body></html>
